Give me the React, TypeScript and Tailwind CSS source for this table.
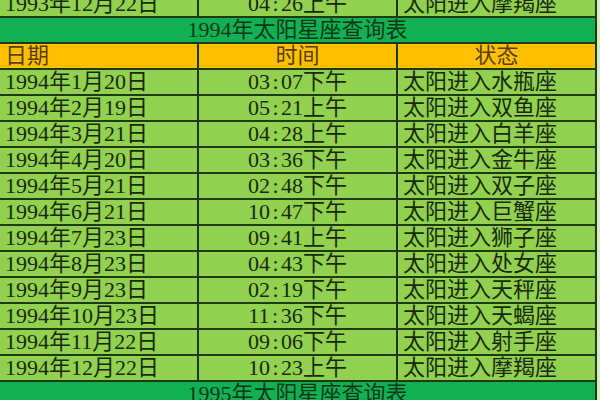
import React from "react";

const rows: [string, string, string][] = [
  ["1994年1月20日", "03:07下午", "太阳进入水瓶座"],
  ["1994年2月19日", "05:21上午", "太阳进入双鱼座"],
  ["1994年3月21日", "04:28上午", "太阳进入白羊座"],
  ["1994年4月20日", "03:36下午", "太阳进入金牛座"],
  ["1994年5月21日", "02:48下午", "太阳进入双子座"],
  ["1994年6月21日", "10:47下午", "太阳进入巨蟹座"],
  ["1994年7月23日", "09:41上午", "太阳进入狮子座"],
  ["1994年8月23日", "04:43下午", "太阳进入处女座"],
  ["1994年9月23日", "02:19下午", "太阳进入天秤座"],
  ["1994年10月23日", "11:36下午", "太阳进入天蝎座"],
  ["1994年11月22日", "09:06下午", "太阳进入射手座"],
  ["1994年12月22日", "10:23上午", "太阳进入摩羯座"],
];

const font = { fontFamily: '"Liberation Serif", "Noto Sans CJK SC", serif' };

function Time({ t }: { t: string }) {
  const [h, rest] = t.split(":");
  return (
    <span>
      {h}
      <span className="px-[2.5px]">:</span>
      {rest}
    </span>
  );
}

function DataRow({ r }: { r: [string, string, string] }) {
  return (
    <div className="flex h-[26px] box-border border-b-2 border-[#1d3a12] bg-[#92d050] text-[#172a0a]">
      <div className="w-[199px] box-border border-r-2 border-[#1d3a12] pl-[5px] flex items-center whitespace-nowrap">
        {r[0]}
      </div>
      <div className="w-[199px] box-border border-r-2 border-[#1d3a12] flex items-center justify-center whitespace-nowrap">
        <Time t={r[1]} />
      </div>
      <div className="w-[199px] box-border border-r-2 border-[#1d3a12] pl-[5px] flex items-center whitespace-nowrap">
        {r[2]}
      </div>
    </div>
  );
}

function TitleRow({ text }: { text: string }) {
  return (
    <div className="flex h-[26px] w-[597px] box-border border-b-2 border-r-2 border-[#1d3a12] bg-[#12b052] text-[#0c3a18] items-center justify-center whitespace-nowrap">
      {text}
    </div>
  );
}

export default function App() {
  return (
    <div
      className="w-[600px] h-[400px] overflow-hidden bg-[#d6ecc4] text-[22px] leading-[24px]"
      style={font}
    >
      <div className="-mt-[8px] w-[597px]">
        <DataRow r={["1993年12月22日", "04:26上午", "太阳进入摩羯座"]} />
        <TitleRow text="1994年太阳星座查询表" />
        <div className="flex h-[26px] box-border border-b-2 border-[#1d3a12] bg-[#ffc000] text-[#5a3f00]">
          <div className="w-[199px] box-border border-r-2 border-[#1d3a12] pl-[5px] flex items-center">
            日期
          </div>
          <div className="w-[199px] box-border border-r-2 border-[#1d3a12] flex items-center justify-center">
            时间
          </div>
          <div className="w-[199px] box-border border-r-2 border-[#1d3a12] flex items-center justify-center">
            状态
          </div>
        </div>
        {rows.map((r, i) => (
          <DataRow key={i} r={r} />
        ))}
        <TitleRow text="1995年太阳星座查询表" />
      </div>
    </div>
  );
}
